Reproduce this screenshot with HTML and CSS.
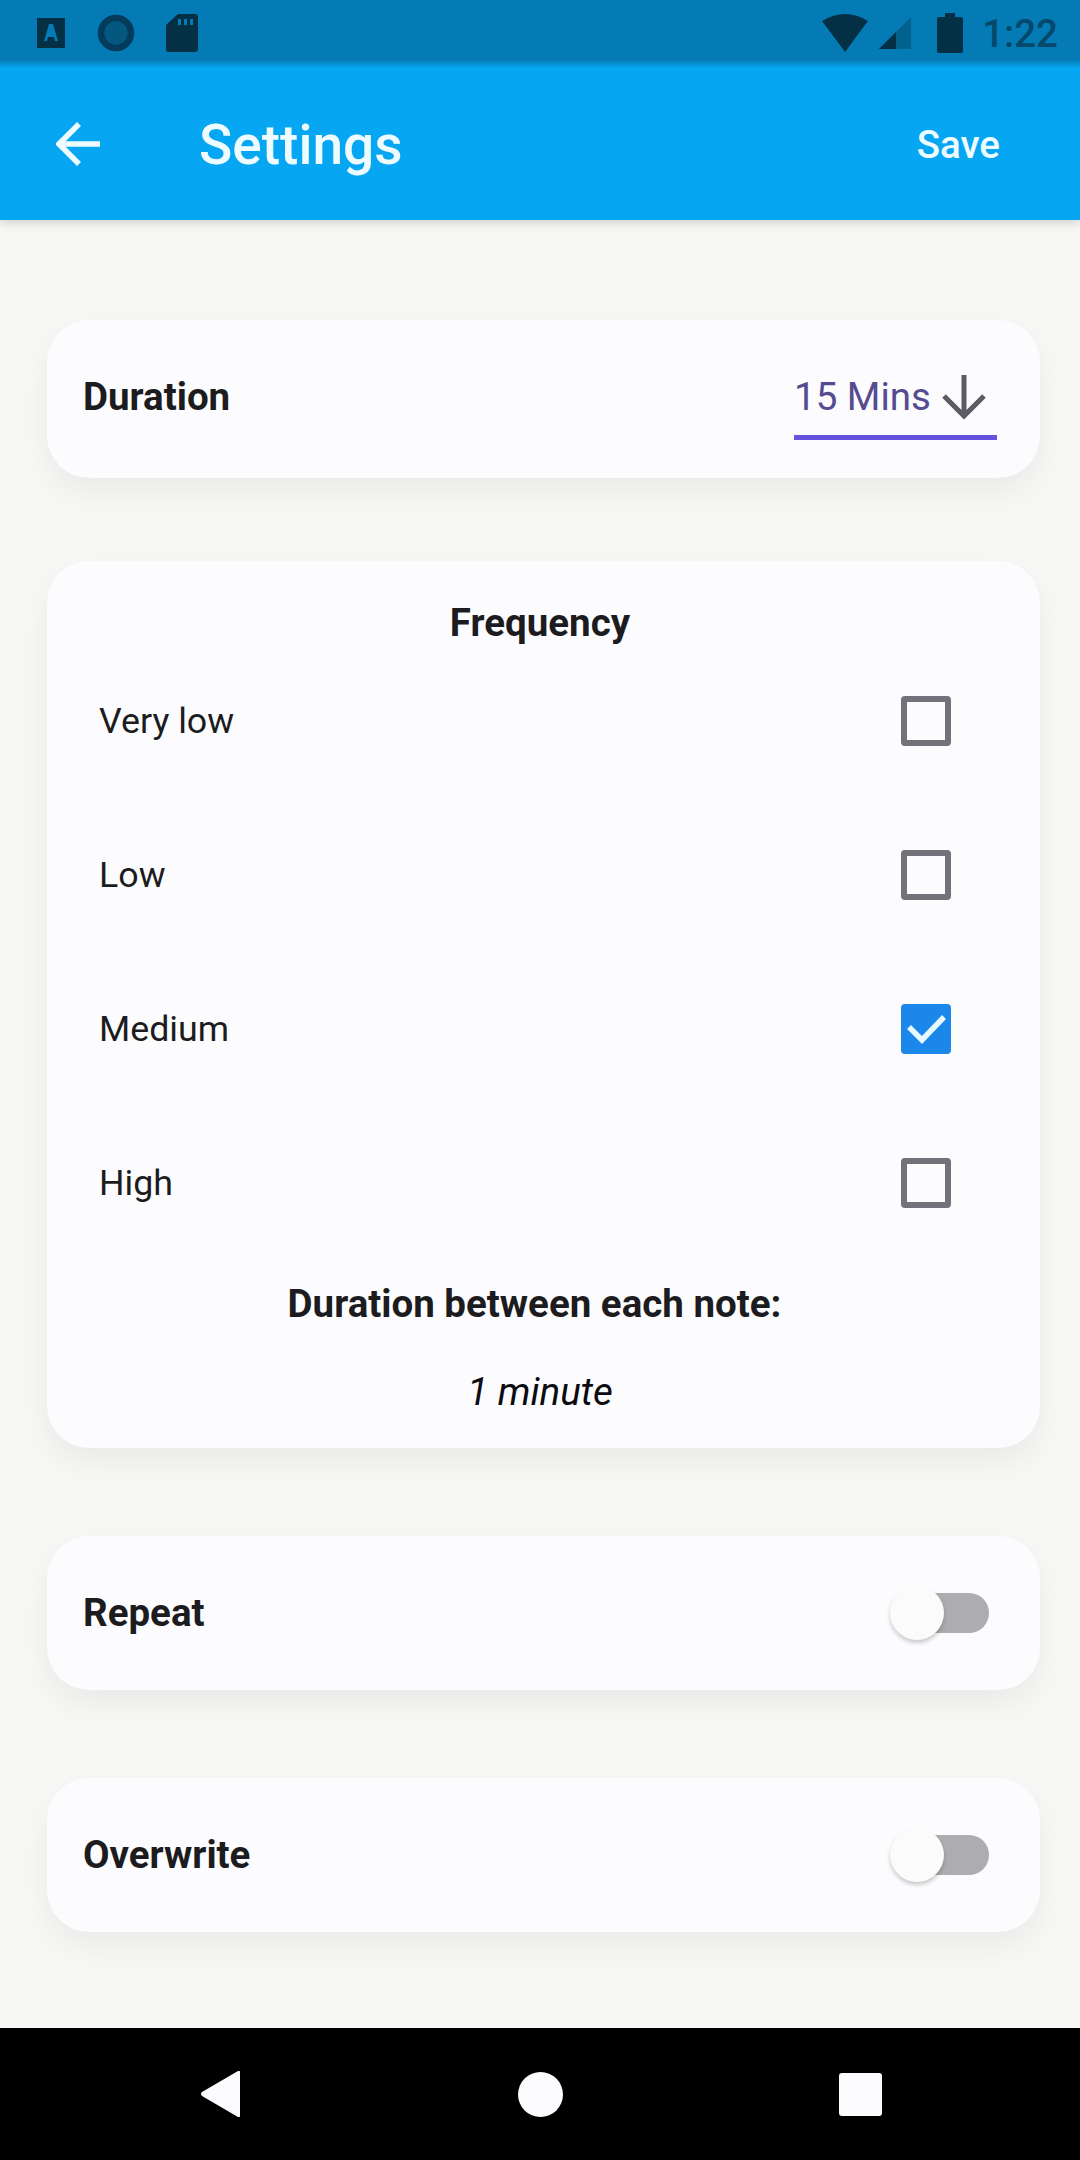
FILE: index.html
```html
<!DOCTYPE html>
<html lang="en">
<head>
<meta charset="utf-8">
<title>Settings</title>
<link rel="stylesheet" href="styles.css">
</head>
<body>
<div class="screen">
  <header class="top">
    <div class="status">
      <div class="status-left">
        <svg width="30" height="34" viewBox="0 0 30 34"><path fill-rule="evenodd" d="M1 2h28v30H1zM13 8l-5 17h3l1-4h6l1 4h3L17 8z"/></svg>
        <svg width="38" height="38" viewBox="0 0 38 38"><circle cx="19" cy="19" r="15" fill="#04587f" stroke="#043b5c" stroke-width="6.5"/></svg>
        <svg width="32" height="40" viewBox="0 0 32 40"><path fill-rule="evenodd" d="M12 1h17q3 0 3 3v32q0 3-3 3H3q-3 0-3-3V12zM12 6v6h3V6zM18 6v6h3V6zM24 6v6h3V6z"/></svg>
      </div>
      <div class="status-right">
        <svg width="46" height="38" viewBox="0 0 46 38"><path d="M0 7Q23-7 46 7L23 38z"/></svg>
        <svg width="32" height="32" viewBox="0 0 32 32"><path d="M32 0v32H0z" opacity=".35"/><path d="M17 15v17H0z"/></svg>
        <svg class="battery" width="26" height="40" viewBox="0 0 26 40"><path d="M8 0h10v4h6q2 0 2 2v32q0 2-2 2H2q-2 0-2-2V6q0-2 2-2h6z"/></svg>
        <span class="clock">1:22</span>
      </div>
    </div>
    <div class="appbar">
      <svg class="back" width="44" height="44" viewBox="0 0 44 44"><path d="M44 22H4M23 2L3 22l20 20" fill="none" stroke="#effcff" stroke-width="5.5"/></svg>
      <h1 class="title">Settings</h1>
      <span class="save">Save</span>
    </div>
  </header>

  <main class="content">
    <section class="card row">
      <span class="label">Duration</span>
      <div class="select">
        <span class="value">15 Mins</span>
        <svg width="44" height="46" viewBox="0 0 44 46"><path d="M22 1v40M2 22l20 20 20-20" fill="none" stroke="#5d5b63" stroke-width="5"/></svg>
      </div>
    </section>

    <section class="card frequency">
      <h2 class="heading">Frequency</h2>
      <div class="option"><span>Very low</span><i class="box"></i></div>
      <div class="option"><span>Low</span><i class="box"></i></div>
      <div class="option"><span>Medium</span><i class="box checked"><svg width="50" height="50" viewBox="0 0 50 50"><path d="M8 23l13 13 22-23" fill="none" stroke="#e6faff" stroke-width="5.5"/></svg></i></div>
      <div class="option"><span>High</span><i class="box"></i></div>
      <h2 class="heading between">Duration between each note:</h2>
      <p class="interval">1 minute</p>
    </section>

    <section class="card row"><span class="label">Repeat</span><span class="toggle"><i class="thumb"></i></span></section>
    <section class="card row"><span class="label">Overwrite</span><span class="toggle"><i class="thumb"></i></span></section>
  </main>

  <nav class="nav">
    <svg width="40" height="46" viewBox="0 0 40 46"><path d="M39 1v44q0 2-2 1L1 25q-2-2 0-4L37 0q2-1 2 1z"/></svg>
    <svg width="45" height="45" viewBox="0 0 45 45"><circle cx="22.5" cy="22.5" r="22.5"/></svg>
    <svg width="43" height="43" viewBox="0 0 43 43"><rect width="43" height="43" rx="3"/></svg>
  </nav>
</div>
</body>
</html>
```

FILE: styles.css
```css
* { box-sizing: border-box; }
body { margin: 0; font-family: Roboto, sans-serif; color: #1c1c20; }
svg { display: block; flex: none; }
h1, h2, p { margin: 0; }

.screen { width: 1080px; height: 2160px; display: flex; flex-direction: column; background: #f7f7f6; overflow: hidden; }

.top { height: 220px; flex: none; background: #06a6f2; box-shadow: 0 2px 10px rgba(0, 0, 0, .18); }
.status { height: 68px; padding: 0 22px 0 36px; display: flex; justify-content: space-between; background: linear-gradient(#047bb4 60px, #06a6f2); fill: #043046; }
.status-left { height: 66px; display: flex; align-items: center; gap: 31px; }
.status-right { height: 66px; display: flex; align-items: center; gap: 11px; }
.battery { margin: 0 8px 0 15px; }
.clock { padding-top: 3px; font-size: 38.5px; font-weight: 500; line-height: 1; color: #04486b; }

.appbar { height: 152px; padding: 0 80px 0 56px; display: flex; align-items: center; color: #effcff; }
.title { margin-left: 99px; padding-top: 3px; font-size: 55px; font-weight: 500; line-height: 1; }
.save { margin-left: auto; font-size: 38.5px; font-weight: 500; }

.content { flex: 1; padding: 100px 40px 0 47px; display: flex; flex-direction: column; gap: 88px; }
.card { flex: none; background: #fcfcfe; border-radius: 42px; box-shadow: 0 14px 32px rgba(0, 0, 0, .055); }
.row { height: 154px; padding: 0 43px 1px 36px; display: flex; align-items: center; justify-content: space-between; }
.row:first-child { height: 158px; padding-bottom: 5px; margin-bottom: -5px; }
.label, .heading { font-size: 38.5px; font-weight: 700; line-height: 45px; }

.select { display: flex; align-items: center; gap: 11px; width: 203px; height: 82px; margin-top: 5px; border-bottom: 5px solid #6653dd; font-size: 38.5px; color: #554b91; }
.value { white-space: nowrap; }

.frequency { height: 887px; padding-top: 39px; text-align: center; }
.heading { padding-right: 7px; }
.heading.between { margin-top: 21px; padding-right: 18px; }
.option { height: 154px; padding: 0 89px 0 52px; display: flex; align-items: center; justify-content: space-between; font-size: 35.75px; }
.heading + .option { margin-top: -1px; }
.box { width: 50px; height: 50px; border: 6px solid #737179; border-radius: 4px; }
.box.checked { border: 0; background: #1c87ea; }
.interval { margin-top: 43px; padding-right: 7px; font-size: 38.5px; line-height: 45px; font-style: italic; color: #0b0b10; }

.toggle { width: 90px; height: 40px; margin-right: 8px; border-radius: 20px; background: #adacb0; display: flex; align-items: center; }
.thumb { flex: none; width: 54px; height: 54px; margin-left: -9px; border-radius: 50%; background: #fbfbfc; box-shadow: 0 3px 4px rgba(0, 0, 0, .2); }

.nav { height: 132px; flex: none; padding: 0 198px 0 201px; display: flex; align-items: center; justify-content: space-between; background: #000; fill: #fcfcff; position: relative; }
```
